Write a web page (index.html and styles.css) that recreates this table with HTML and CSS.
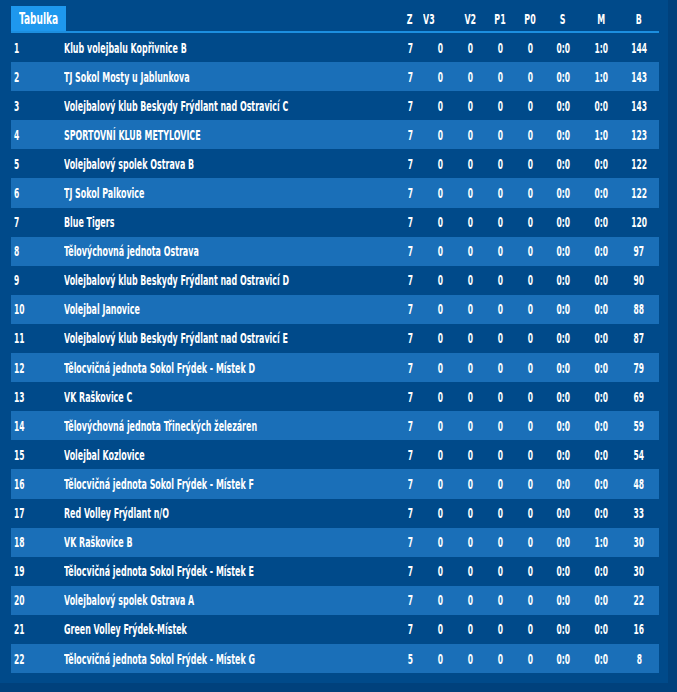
FILE: index.html
```html
<!DOCTYPE html>
<html lang="cs">
<head>
<meta charset="utf-8">
<title>Tabulka</title>
<link rel="stylesheet" href="styles.css">
</head>
<body>
<div class="frame">
  <div class="standings">
    <div class="row head">
      <div class="tab"><span class="t">Tabulka</span></div>
      <div class="c"><span class="t">Z</span></div>
      <div class="c v3"><span class="t">V3</span></div>
      <div class="c"><span class="t">V2</span></div>
      <div class="c"><span class="t">P1</span></div>
      <div class="c"><span class="t">P0</span></div>
      <div class="c"><span class="t">S</span></div>
      <div class="c"><span class="t">M</span></div>
      <div class="c"><span class="t">B</span></div>
    </div>
    <div class="row"><div class="rank"><span class="t">1</span></div><div class="name"><span class="t">Klub volejbalu Kopřivnice B</span></div><div class="c"><span class="t">7</span></div><div class="c"><span class="t">0</span></div><div class="c"><span class="t">0</span></div><div class="c"><span class="t">0</span></div><div class="c"><span class="t">0</span></div><div class="c"><span class="t">0:0</span></div><div class="c"><span class="t">1:0</span></div><div class="c"><span class="t">144</span></div></div>
    <div class="row alt"><div class="rank"><span class="t">2</span></div><div class="name"><span class="t">TJ Sokol Mosty u Jablunkova</span></div><div class="c"><span class="t">7</span></div><div class="c"><span class="t">0</span></div><div class="c"><span class="t">0</span></div><div class="c"><span class="t">0</span></div><div class="c"><span class="t">0</span></div><div class="c"><span class="t">0:0</span></div><div class="c"><span class="t">1:0</span></div><div class="c"><span class="t">143</span></div></div>
    <div class="row"><div class="rank"><span class="t">3</span></div><div class="name"><span class="t">Volejbalový klub Beskydy Frýdlant nad Ostravicí C</span></div><div class="c"><span class="t">7</span></div><div class="c"><span class="t">0</span></div><div class="c"><span class="t">0</span></div><div class="c"><span class="t">0</span></div><div class="c"><span class="t">0</span></div><div class="c"><span class="t">0:0</span></div><div class="c"><span class="t">0:0</span></div><div class="c"><span class="t">143</span></div></div>
    <div class="row alt"><div class="rank"><span class="t">4</span></div><div class="name"><span class="t">SPORTOVNÍ KLUB METYLOVICE</span></div><div class="c"><span class="t">7</span></div><div class="c"><span class="t">0</span></div><div class="c"><span class="t">0</span></div><div class="c"><span class="t">0</span></div><div class="c"><span class="t">0</span></div><div class="c"><span class="t">0:0</span></div><div class="c"><span class="t">1:0</span></div><div class="c"><span class="t">123</span></div></div>
    <div class="row"><div class="rank"><span class="t">5</span></div><div class="name"><span class="t">Volejbalový spolek Ostrava B</span></div><div class="c"><span class="t">7</span></div><div class="c"><span class="t">0</span></div><div class="c"><span class="t">0</span></div><div class="c"><span class="t">0</span></div><div class="c"><span class="t">0</span></div><div class="c"><span class="t">0:0</span></div><div class="c"><span class="t">0:0</span></div><div class="c"><span class="t">122</span></div></div>
    <div class="row alt"><div class="rank"><span class="t">6</span></div><div class="name"><span class="t">TJ Sokol Palkovice</span></div><div class="c"><span class="t">7</span></div><div class="c"><span class="t">0</span></div><div class="c"><span class="t">0</span></div><div class="c"><span class="t">0</span></div><div class="c"><span class="t">0</span></div><div class="c"><span class="t">0:0</span></div><div class="c"><span class="t">0:0</span></div><div class="c"><span class="t">122</span></div></div>
    <div class="row"><div class="rank"><span class="t">7</span></div><div class="name"><span class="t">Blue Tigers</span></div><div class="c"><span class="t">7</span></div><div class="c"><span class="t">0</span></div><div class="c"><span class="t">0</span></div><div class="c"><span class="t">0</span></div><div class="c"><span class="t">0</span></div><div class="c"><span class="t">0:0</span></div><div class="c"><span class="t">0:0</span></div><div class="c"><span class="t">120</span></div></div>
    <div class="row alt"><div class="rank"><span class="t">8</span></div><div class="name"><span class="t">Tělovýchovná jednota Ostrava</span></div><div class="c"><span class="t">7</span></div><div class="c"><span class="t">0</span></div><div class="c"><span class="t">0</span></div><div class="c"><span class="t">0</span></div><div class="c"><span class="t">0</span></div><div class="c"><span class="t">0:0</span></div><div class="c"><span class="t">0:0</span></div><div class="c"><span class="t">97</span></div></div>
    <div class="row"><div class="rank"><span class="t">9</span></div><div class="name"><span class="t">Volejbalový klub Beskydy Frýdlant nad Ostravicí D</span></div><div class="c"><span class="t">7</span></div><div class="c"><span class="t">0</span></div><div class="c"><span class="t">0</span></div><div class="c"><span class="t">0</span></div><div class="c"><span class="t">0</span></div><div class="c"><span class="t">0:0</span></div><div class="c"><span class="t">0:0</span></div><div class="c"><span class="t">90</span></div></div>
    <div class="row alt"><div class="rank"><span class="t">10</span></div><div class="name"><span class="t">Volejbal Janovice</span></div><div class="c"><span class="t">7</span></div><div class="c"><span class="t">0</span></div><div class="c"><span class="t">0</span></div><div class="c"><span class="t">0</span></div><div class="c"><span class="t">0</span></div><div class="c"><span class="t">0:0</span></div><div class="c"><span class="t">0:0</span></div><div class="c"><span class="t">88</span></div></div>
    <div class="row"><div class="rank"><span class="t">11</span></div><div class="name"><span class="t">Volejbalový klub Beskydy Frýdlant nad Ostravicí E</span></div><div class="c"><span class="t">7</span></div><div class="c"><span class="t">0</span></div><div class="c"><span class="t">0</span></div><div class="c"><span class="t">0</span></div><div class="c"><span class="t">0</span></div><div class="c"><span class="t">0:0</span></div><div class="c"><span class="t">0:0</span></div><div class="c"><span class="t">87</span></div></div>
    <div class="row alt"><div class="rank"><span class="t">12</span></div><div class="name"><span class="t">Tělocvičná jednota Sokol Frýdek - Místek D</span></div><div class="c"><span class="t">7</span></div><div class="c"><span class="t">0</span></div><div class="c"><span class="t">0</span></div><div class="c"><span class="t">0</span></div><div class="c"><span class="t">0</span></div><div class="c"><span class="t">0:0</span></div><div class="c"><span class="t">0:0</span></div><div class="c"><span class="t">79</span></div></div>
    <div class="row"><div class="rank"><span class="t">13</span></div><div class="name"><span class="t">VK Raškovice C</span></div><div class="c"><span class="t">7</span></div><div class="c"><span class="t">0</span></div><div class="c"><span class="t">0</span></div><div class="c"><span class="t">0</span></div><div class="c"><span class="t">0</span></div><div class="c"><span class="t">0:0</span></div><div class="c"><span class="t">0:0</span></div><div class="c"><span class="t">69</span></div></div>
    <div class="row alt"><div class="rank"><span class="t">14</span></div><div class="name"><span class="t">Tělovýchovná jednota Třineckých železáren</span></div><div class="c"><span class="t">7</span></div><div class="c"><span class="t">0</span></div><div class="c"><span class="t">0</span></div><div class="c"><span class="t">0</span></div><div class="c"><span class="t">0</span></div><div class="c"><span class="t">0:0</span></div><div class="c"><span class="t">0:0</span></div><div class="c"><span class="t">59</span></div></div>
    <div class="row"><div class="rank"><span class="t">15</span></div><div class="name"><span class="t">Volejbal Kozlovice</span></div><div class="c"><span class="t">7</span></div><div class="c"><span class="t">0</span></div><div class="c"><span class="t">0</span></div><div class="c"><span class="t">0</span></div><div class="c"><span class="t">0</span></div><div class="c"><span class="t">0:0</span></div><div class="c"><span class="t">0:0</span></div><div class="c"><span class="t">54</span></div></div>
    <div class="row alt"><div class="rank"><span class="t">16</span></div><div class="name"><span class="t">Tělocvičná jednota Sokol Frýdek - Místek F</span></div><div class="c"><span class="t">7</span></div><div class="c"><span class="t">0</span></div><div class="c"><span class="t">0</span></div><div class="c"><span class="t">0</span></div><div class="c"><span class="t">0</span></div><div class="c"><span class="t">0:0</span></div><div class="c"><span class="t">0:0</span></div><div class="c"><span class="t">48</span></div></div>
    <div class="row"><div class="rank"><span class="t">17</span></div><div class="name"><span class="t">Red Volley Frýdlant n/O</span></div><div class="c"><span class="t">7</span></div><div class="c"><span class="t">0</span></div><div class="c"><span class="t">0</span></div><div class="c"><span class="t">0</span></div><div class="c"><span class="t">0</span></div><div class="c"><span class="t">0:0</span></div><div class="c"><span class="t">0:0</span></div><div class="c"><span class="t">33</span></div></div>
    <div class="row alt"><div class="rank"><span class="t">18</span></div><div class="name"><span class="t">VK Raškovice B</span></div><div class="c"><span class="t">7</span></div><div class="c"><span class="t">0</span></div><div class="c"><span class="t">0</span></div><div class="c"><span class="t">0</span></div><div class="c"><span class="t">0</span></div><div class="c"><span class="t">0:0</span></div><div class="c"><span class="t">1:0</span></div><div class="c"><span class="t">30</span></div></div>
    <div class="row"><div class="rank"><span class="t">19</span></div><div class="name"><span class="t">Tělocvičná jednota Sokol Frýdek - Místek E</span></div><div class="c"><span class="t">7</span></div><div class="c"><span class="t">0</span></div><div class="c"><span class="t">0</span></div><div class="c"><span class="t">0</span></div><div class="c"><span class="t">0</span></div><div class="c"><span class="t">0:0</span></div><div class="c"><span class="t">0:0</span></div><div class="c"><span class="t">30</span></div></div>
    <div class="row alt"><div class="rank"><span class="t">20</span></div><div class="name"><span class="t">Volejbalový spolek Ostrava A</span></div><div class="c"><span class="t">7</span></div><div class="c"><span class="t">0</span></div><div class="c"><span class="t">0</span></div><div class="c"><span class="t">0</span></div><div class="c"><span class="t">0</span></div><div class="c"><span class="t">0:0</span></div><div class="c"><span class="t">0:0</span></div><div class="c"><span class="t">22</span></div></div>
    <div class="row"><div class="rank"><span class="t">21</span></div><div class="name"><span class="t">Green Volley Frýdek-Místek</span></div><div class="c"><span class="t">7</span></div><div class="c"><span class="t">0</span></div><div class="c"><span class="t">0</span></div><div class="c"><span class="t">0</span></div><div class="c"><span class="t">0</span></div><div class="c"><span class="t">0:0</span></div><div class="c"><span class="t">0:0</span></div><div class="c"><span class="t">16</span></div></div>
    <div class="row alt"><div class="rank"><span class="t">22</span></div><div class="name"><span class="t">Tělocvičná jednota Sokol Frýdek - Místek G</span></div><div class="c"><span class="t">5</span></div><div class="c"><span class="t">0</span></div><div class="c"><span class="t">0</span></div><div class="c"><span class="t">0</span></div><div class="c"><span class="t">0</span></div><div class="c"><span class="t">0:0</span></div><div class="c"><span class="t">0:0</span></div><div class="c"><span class="t">8</span></div></div>
  </div>
</div>
</body>
</html>
```
FILE: styles.css
```css
html, body {
  margin: 0;
  padding: 0;
  background: #00417c;
}
body {
  width: 677px;
  height: 692px;
  overflow: hidden;
  font-family: "DejaVu Sans Condensed", "Liberation Sans", sans-serif;
  font-weight: bold;
  color: #ffffff;
}
.frame {
  width: 668px;
  height: 683px;
  background: #004a8a;
  padding: 6px 0 0 11px;
  box-sizing: border-box;
}
.standings {
  width: 648px;
}
.row {
  display: grid;
  grid-template-columns: 50px 335px 28px 32px 28px 32px 28px 38px 38px 38px;
  height: 29.1px;
  align-items: center;
  font-size: 14px;
  line-height: 1;
}
.row.alt {
  background: #1a6fb8;
}
.row.head {
  height: 25px;
  align-items: stretch;
  border-bottom: 2px solid #1c8fe0;
}
.head .c {
  display: flex;
  align-items: center;
  justify-content: center;
}
.head .v3 {
  justify-content: flex-start;
  margin-left: -1px;
}
.head .v3 .t {
  transform-origin: left center;
}
.tab {
  grid-column: 1 / 3;
  width: 55px;
  background: #1e98ee;
  display: flex;
  align-items: center;
  padding-left: 8px;
  box-sizing: border-box;
  font-size: 16px;
}
.t {
  display: inline-block;
  transform: scaleX(0.63);
  transform-origin: left center;
  white-space: nowrap;
}
.rank .t,
.c .t {
  transform: scaleX(0.6);
}
.c .t {
  transform-origin: center center;
}
.head .c .t {
  transform: scaleX(0.63);
}
.rank {
  padding-left: 3px;
}
.name {
  padding-left: 3px;
}
.c {
  text-align: center;
}
```
